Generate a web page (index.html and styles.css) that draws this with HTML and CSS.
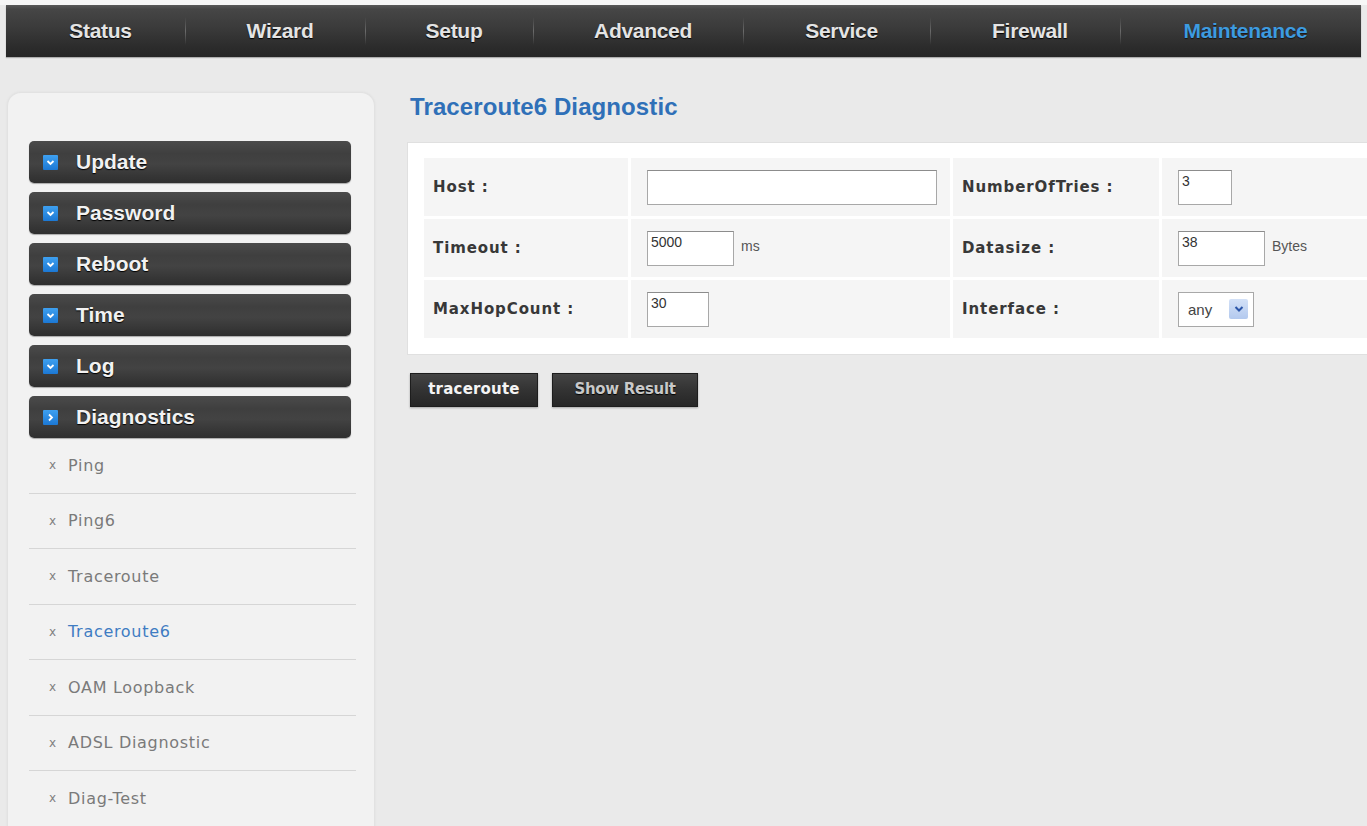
FILE: index.html
```html
<!DOCTYPE html>
<html>
<head>
  <meta charset="UTF-8">
  <title>Maintenance - Traceroute6 Diagnostic</title>
  <link rel="stylesheet" href="styles.css">
</head>
<body>

  <div class="topnav">
    <a class="nav-item w-status">Status</a>
    <a class="nav-item w-wizard">Wizard</a>
    <a class="nav-item w-setup">Setup</a>
    <a class="nav-item w-advanced">Advanced</a>
    <a class="nav-item w-service">Service</a>
    <a class="nav-item w-firewall">Firewall</a>
    <a class="nav-item w-maint active">Maintenance</a>
  </div>

  <div class="page">
    <div class="sidebar">
      <div class="menu-bar"><span class="menu-icon"><svg width="9" height="9" viewBox="0 0 9 9"><path d="M1.5 3 L4.5 6 L7.5 3" fill="none" stroke="#fff" stroke-width="1.8"/></svg></span>Update</div>
      <div class="menu-bar"><span class="menu-icon"><svg width="9" height="9" viewBox="0 0 9 9"><path d="M1.5 3 L4.5 6 L7.5 3" fill="none" stroke="#fff" stroke-width="1.8"/></svg></span>Password</div>
      <div class="menu-bar"><span class="menu-icon"><svg width="9" height="9" viewBox="0 0 9 9"><path d="M1.5 3 L4.5 6 L7.5 3" fill="none" stroke="#fff" stroke-width="1.8"/></svg></span>Reboot</div>
      <div class="menu-bar"><span class="menu-icon"><svg width="9" height="9" viewBox="0 0 9 9"><path d="M1.5 3 L4.5 6 L7.5 3" fill="none" stroke="#fff" stroke-width="1.8"/></svg></span>Time</div>
      <div class="menu-bar"><span class="menu-icon"><svg width="9" height="9" viewBox="0 0 9 9"><path d="M1.5 3 L4.5 6 L7.5 3" fill="none" stroke="#fff" stroke-width="1.8"/></svg></span>Log</div>
      <div class="menu-bar"><span class="menu-icon"><svg width="9" height="9" viewBox="0 0 9 9"><path d="M3 1.5 L6 4.5 L3 7.5" fill="none" stroke="#fff" stroke-width="1.8"/></svg></span>Diagnostics</div>

      <ul class="sub-menu">
        <li><span class="mark">x</span>Ping</li>
        <li><span class="mark">x</span>Ping6</li>
        <li><span class="mark">x</span>Traceroute</li>
        <li class="current"><span class="mark">x</span>Traceroute6</li>
        <li><span class="mark">x</span>OAM Loopback</li>
        <li><span class="mark">x</span>ADSL Diagnostic</li>
        <li><span class="mark">x</span>Diag-Test</li>
      </ul>
    </div>

    <div class="main">
      <h1 class="title">Traceroute6 Diagnostic</h1>

      <div class="panel">
        <table class="form-table">
          <colgroup>
            <col class="c1"><col class="c2"><col class="c3"><col class="c4">
          </colgroup>
          <tr>
            <td class="label">Host :</td>
            <td class="field"><input type="text" class="txt host" value=""></td>
            <td class="label">NumberOfTries :</td>
            <td class="field"><input type="text" class="txt tiny" value="3"></td>
          </tr>
          <tr>
            <td class="label">Timeout :</td>
            <td class="field"><input type="text" class="txt mid" value="5000"><span class="unit">ms</span></td>
            <td class="label">Datasize :</td>
            <td class="field"><input type="text" class="txt mid" value="38"><span class="unit">Bytes</span></td>
          </tr>
          <tr>
            <td class="label">MaxHopCount :</td>
            <td class="field"><input type="text" class="txt small" value="30"></td>
            <td class="label">Interface :</td>
            <td class="field">
              <div class="select">
                <span class="select-text">any</span>
                <span class="select-arrow"><svg width="10" height="8" viewBox="0 0 10 8"><path d="M1.5 2 L5 5.5 L8.5 2" fill="none" stroke="#2b55a8" stroke-width="2"/></svg></span>
              </div>
            </td>
          </tr>
        </table>
      </div>

      <div class="actions">
        <button class="btn">traceroute</button>
        <button class="btn btn-grey">Show Result</button>
      </div>
    </div>
  </div>

</body>
</html>
```

FILE: styles.css
```css
html, body {
  overflow: hidden;
}
body {
  margin: 0;
  padding-top: 5px;
  font-family: "Liberation Sans", Arial, sans-serif;
  background: linear-gradient(#f7f7f7 0, #f7f7f7 5px, #eaeaea 5px);
  height: 821px;
}

/* top navigation */
.topnav {
  display: flex;
  margin: 0 6px;
  height: 52px;
  background: linear-gradient(#5a5a5a 0, #464646 8%, #3a3a3a 45%, #2c2c2c 80%, #262626 100%);
  box-shadow: 0 1px 1px rgba(0, 0, 0, 0.25);
}
.nav-item {
  position: relative;
  display: flex;
  align-items: center;
  justify-content: center;
  padding-left: 10px;
  box-sizing: border-box;
  font-size: 21px;
  font-weight: bold;
  letter-spacing: -0.3px;
  color: #e4e4e4;
  text-shadow: 0 1px 1px #000;
}
.nav-item + .nav-item::before {
  content: "";
  position: absolute;
  left: 0;
  top: 12px;
  width: 1px;
  height: 28px;
  background: linear-gradient(rgba(120, 120, 120, 0), #6a6a6a 50%, rgba(120, 120, 120, 0));
}
.w-status { width: 179px; }
.w-wizard { width: 180px; }
.w-setup { width: 168px; }
.w-advanced { width: 210px; }
.w-service { width: 187px; }
.w-firewall { width: 190px; }
.w-maint { flex: 1; }
.nav-item.active {
  color: #3d9be0;
  text-shadow: 0 1px 1px rgba(0, 0, 0, 0.6);
}

/* page layout */
.page {
  display: flex;
  align-items: flex-start;
}

.sidebar {
  flex: none;
  width: 368px;
  box-sizing: border-box;
  margin: 35px 0 0 7px;
  padding: 48px 23px 30px 21px;
  background: #f2f2f2;
  border: 1px solid #e2e2e2;
  border-bottom: none;
  border-radius: 14px 14px 0 0;
  box-shadow: 0 0 3px rgba(0, 0, 0, 0.05);
}
.menu-bar {
  display: flex;
  align-items: center;
  height: 42px;
  margin-bottom: 9px;
  padding-left: 14px;
  border-radius: 5px;
  background: linear-gradient(#4b4b4b 0, #3f3f3f 30%, #434343 55%, #353535 85%, #2f2f2f 100%);
  box-shadow: 0 1px 1px rgba(0, 0, 0, 0.3);
  font-size: 21px;
  font-weight: bold;
  color: #f2f2f2;
  text-shadow: 0 1px 1px #000;
}
.menu-bar:nth-child(6) {
  margin-bottom: 0;
}
.menu-icon {
  display: flex;
  align-items: center;
  justify-content: center;
  width: 15px;
  height: 15px;
  margin-right: 18px;
  background: linear-gradient(#3ea0f0, #1c78d4);
  border-radius: 1px;
}

.sub-menu {
  list-style: none;
  margin: 0 -5px 0 0;
  padding: 0;
}
.sub-menu li {
  display: flex;
  align-items: center;
  height: 54.5px;
  padding-left: 20px;
  border-bottom: 1px solid #d6d6d6;
  font-family: "DejaVu Sans", sans-serif;
  font-size: 16px;
  letter-spacing: 0.7px;
  color: #7a7a7a;
}
.sub-menu li:last-child {
  border-bottom: none;
}
.sub-menu li.current {
  color: #3f7cc2;
}
.sub-menu .mark {
  width: 19px;
  font-size: 12px;
  color: #808080;
}

/* main content */
.main {
  flex: none;
  margin: 36px 0 0 32px;
}
.title {
  margin: 0 0 21px 3px;
  font-size: 24px;
  line-height: 28px;
  font-weight: bold;
  color: #2f70b8;
  letter-spacing: 0.1px;
}
.panel {
  width: 990px;
  box-sizing: border-box;
  padding: 12px 13px 13px;
  background: #fff;
  border: 1px solid #e0e0e0;
  border-right: none;
}
.form-table {
  width: 964px;
  border-spacing: 3px;
  table-layout: fixed;
}
.form-table td {
  box-sizing: border-box;
  height: 58px;
  padding: 0;
  background: #f5f5f5;
}
.c1 { width: 204px; }
.c2 { width: 319px; }
.c3 { width: 206px; }
.c4 { width: 220px; }
.form-table td.label {
  padding-left: 9px;
  font-family: "DejaVu Sans", sans-serif;
  font-size: 15px;
  font-weight: bold;
  letter-spacing: 0.9px;
  color: #383838;
}
.form-table td.field {
  padding-left: 16px;
}
.txt {
  height: 35px;
  box-sizing: border-box;
  padding: 0 3px 12px;
  border: 1px solid #a8a8a8;
  border-top-color: #8c8c8c;
  font-family: "Liberation Sans", Arial, sans-serif;
  font-size: 14px;
  color: #333;
  background: #fff;
  vertical-align: middle;
}
.host { width: 290px; }
.mid { width: 87px; }
.small { width: 62px; }
.tiny { width: 54px; }
.unit {
  margin-left: 7px;
  font-size: 14px;
  color: #555;
  vertical-align: middle;
  position: relative;
  top: -2px;
}
.select {
  display: flex;
  align-items: center;
  justify-content: space-between;
  width: 76px;
  height: 35px;
  box-sizing: border-box;
  padding: 0 5px 0 9px;
  border: 1px solid #a8a8a8;
  background: #fff;
}
.select-text {
  font-size: 15px;
  color: #444;
}
.select-arrow {
  display: flex;
  align-items: center;
  justify-content: center;
  width: 19px;
  height: 20px;
  background: linear-gradient(#d3e1f7, #b3c9ee);
  border-radius: 2px;
}

.actions {
  display: flex;
  gap: 14px;
  margin: 18px 0 0 3px;
}
.btn {
  height: 34px;
  padding: 0;
  width: 128px;
  border: 1px solid #1d1d1d;
  background: linear-gradient(#444, #333 50%, #262626);
  box-shadow: 0 1px 2px rgba(0, 0, 0, 0.3);
  font-family: "DejaVu Sans", sans-serif;
  font-size: 15px;
  font-weight: bold;
  letter-spacing: 0.2px;
  color: #f4f4f4;
  padding-bottom: 3px;
  cursor: pointer;
}
.btn-grey {
  width: 146px;
  color: #c9c9c9;
  letter-spacing: -0.3px;
  text-shadow: 0 1px 1px #000;
}
```
